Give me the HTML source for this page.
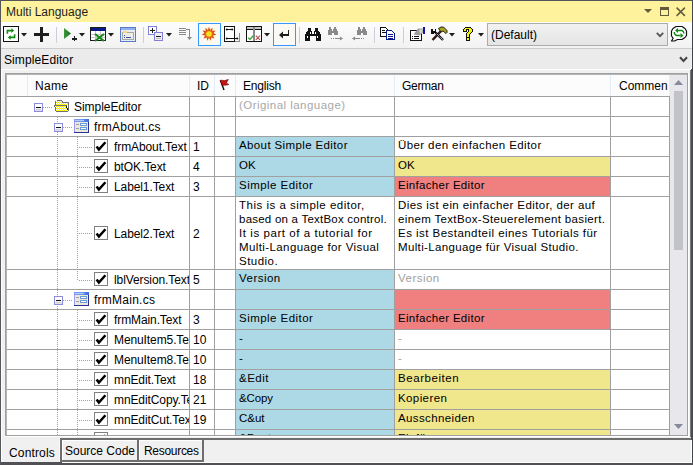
<!DOCTYPE html>
<html><head><meta charset="utf-8">
<style>
*{box-sizing:border-box;margin:0;padding:0}
html,body{width:693px;height:465px;overflow:hidden;background:#F0F0F0}
body{position:relative;font-family:"Liberation Sans",sans-serif;font-size:12px;color:#000}
.a{position:absolute;display:block}
.t{position:absolute;white-space:pre;line-height:19px;height:19px}
.c{position:absolute;white-space:pre;line-height:19px;height:19px;overflow:hidden;font-size:11.5px;letter-spacing:0.4px}
.m{position:absolute;white-space:pre;line-height:14px;font-size:11.5px}
</style></head><body>
<div class="a" style="left:1px;top:1px;width:691px;height:21px;background:#FFF29D;"></div>
<div class="t" style="left:6px;top:3px;color:#1E1E1E">Multi Language</div>
<svg class="a" style="left:640px;top:4px" width="52" height="16" viewBox="0 0 52 16" shape-rendering="crispEdges"><path d="M4 5h8l-4 4z" fill="#645A3C" shape-rendering="auto"/><rect x="20.5" y="3.5" width="8" height="8" fill="none" stroke="#645A3C"/><rect x="20" y="3" width="9" height="2.5" fill="#645A3C"/><path d="M36.6 3.6l8.3 8.3M44.9 3.6l-8.3 8.3" stroke="#645A3C" stroke-width="1.5" shape-rendering="auto"/></svg>
<div class="a" style="left:1px;top:22px;width:691px;height:26px;background:linear-gradient(#FDFDFD,#F2F2F2);"></div>
<div class="a" style="left:1px;top:48px;width:691px;height:1px;background:#CCCCCC;"></div>
<svg class="a" style="left:3px;top:26px" width="16" height="16" viewBox="0 0 16 16" shape-rendering="crispEdges"><rect x="0.5" y="0.5" width="15" height="15" fill="#fff" stroke="#111"/><g shape-rendering="auto" fill="none" stroke="#118A11" stroke-width="1.6"><path d="M4.4 7.8V4.6H9.2"/><path d="M11.6 8.2V11.4H6.8"/></g><g shape-rendering="auto" fill="#118A11"><path d="M8.3 2.2L11.2 4.6 8.3 7z"/><path d="M7.7 9L4.8 11.4 7.7 13.8z"/></g></svg>
<svg class="a" style="left:21px;top:33px" width="6" height="4" viewBox="0 0 6 4" shape-rendering="crispEdges"><path d="M0 0h6l-3 3.5z" fill="#1E1E1E" shape-rendering="auto"/></svg>
<div class="a" style="left:34px;top:33px;width:15px;height:3px;background:#1E1E1E;"></div>
<div class="a" style="left:40px;top:27px;width:3px;height:15px;background:#1E1E1E;"></div>
<div class="a" style="left:56px;top:27px;width:1px;height:16px;background:#CCCEDB;"></div>
<svg class="a" style="left:63px;top:27px" width="22" height="15" viewBox="0 0 22 15" shape-rendering="crispEdges"><defs><linearGradient id="gp" x1="0" y1="0" x2="1" y2="0"><stop offset="0" stop-color="#3C9A3C"/><stop offset="1" stop-color="#1E6E1E"/></linearGradient></defs><path d="M1 1l7 5.5-7 5.5z" fill="url(#gp)" shape-rendering="auto"/><rect x="9" y="11" width="5" height="1.5" fill="#1E1E1E"/><rect x="10.8" y="9" width="1.5" height="5" fill="#1E1E1E"/></svg>
<svg class="a" style="left:79px;top:33px" width="6" height="4" viewBox="0 0 6 4" shape-rendering="crispEdges"><path d="M0 0h6l-3 3.5z" fill="#1E1E1E" shape-rendering="auto"/></svg>
<svg class="a" style="left:90px;top:27px" width="17" height="15" viewBox="0 0 17 15" shape-rendering="crispEdges"><rect x="0.5" y="0.5" width="15" height="13" fill="#fff" stroke="#1E1E1E"/><rect x="1" y="1" width="15" height="3" fill="#0A1A8A"/><path d="M1 7.5h14M1 10.5h14M5.5 4v9M10.5 4v9" stroke="#C8C8C8"/><path d="M5 7l9 7M14 7l-9 7" stroke="#1A8A1A" stroke-width="2.2" shape-rendering="auto"/></svg>
<svg class="a" style="left:108px;top:33px" width="6" height="4" viewBox="0 0 6 4" shape-rendering="crispEdges"><path d="M0 0h6l-3 3.5z" fill="#1E1E1E" shape-rendering="auto"/></svg>
<svg class="a" style="left:120px;top:27px" width="17" height="16" viewBox="0 0 17 16" shape-rendering="crispEdges"><rect x="0.5" y="0.5" width="15" height="14" fill="#E8ECF4" stroke="#5A7CC8"/><rect x="1" y="1" width="14" height="2" fill="#8FB0E8"/><rect x="2.5" y="5.5" width="11" height="7" fill="#EDEDE6" stroke="#A8A8A0"/><rect x="3" y="4" width="4" height="2" fill="#F0D890"/><rect x="4" y="8" width="1" height="1" fill="#3050C0"/><rect x="4" y="10" width="1" height="1" fill="#3050C0"/><rect x="6" y="10" width="5" height="1" fill="#3050C0"/></svg>
<div class="a" style="left:143px;top:27px;width:1px;height:16px;background:#CCCEDB;"></div>
<svg class="a" style="left:148px;top:26px" width="17" height="16" viewBox="0 0 17 16" shape-rendering="crispEdges"><rect x="0.5" y="0.5" width="8" height="8" rx="1" fill="#fff" stroke="#8080DA"/><path d="M2 4.5h5M4.5 2v5" stroke="#1E1E1E" stroke-width="1.2"/><rect x="6.5" y="6.5" width="8" height="8" rx="1" fill="#F0F0F0" stroke="#8080DA"/><path d="M8 10.5h5" stroke="#1E1E1E" stroke-width="1.2"/><path d="M8 12.5h5" stroke="#C0C0C0"/></svg>
<svg class="a" style="left:166px;top:33px" width="6" height="4" viewBox="0 0 6 4" shape-rendering="crispEdges"><path d="M0 0h6l-3 3.5z" fill="#1E1E1E" shape-rendering="auto"/></svg>
<svg class="a" style="left:178px;top:27px" width="16" height="14" viewBox="0 0 16 14" shape-rendering="crispEdges"><path d="M1 1.5h7M1 3.5h7M1 5.5h7M1 7.5h7" stroke="#8A8A8A"/><path d="M8 2.5h3.5v9" fill="none" stroke="#8A8A8A"/><path d="M9 10l2.5 3 2.5-3z" fill="#8A8A8A" shape-rendering="auto"/></svg>
<div class="a" style="left:198px;top:23px;width:23px;height:23px;background:#FBF9F4;border:1px solid #3399FF"></div>
<svg class="a" style="left:200px;top:25px" width="19" height="19" viewBox="0 0 19 19" shape-rendering="crispEdges"><g shape-rendering="auto"><circle cx="9" cy="9" r="7" fill="#FFF6C0" opacity="0.6"/><path d="M9 1.8L10.1 5 12.6 2.8 12.3 6.1 15.5 5.5 13.5 8.1 16.3 9.8 12.9 10.5 14.4 13.5 11.3 12.4 10.6 15.8 9 12.8 7.4 15.8 6.7 12.4 3.6 13.5 5.1 10.5 1.7 9.8 4.5 8.1 2.5 5.5 5.7 6.1 5.4 2.8 7.9 5z" fill="#D84A1E"/><circle cx="9" cy="9" r="4" fill="#E86A18"/><circle cx="9" cy="9" r="2.8" fill="#F4E21A"/></g></svg>
<svg class="a" style="left:224px;top:26px" width="17" height="17" viewBox="0 0 17 17" shape-rendering="crispEdges"><rect x="0.5" y="0.5" width="10" height="15" fill="#fff" stroke="#111"/><rect x="0" y="0" width="11" height="1.2" fill="#111"/><path d="M2 3.5H9M2 12.5H14" stroke="#111"/><g shape-rendering="auto" fill="#111"><path d="M1.5 3.5L3.2 2V5z"/><path d="M9.5 3.5L7.8 2V5z"/><path d="M1.5 12.5L3.2 11V14z"/><path d="M14.5 12.5L12.8 11V14z"/></g><path d="M15.5 7V15.5H11" fill="none" stroke="#8A8A8A"/></svg>
<svg class="a" style="left:246px;top:26px" width="17" height="17" viewBox="0 0 17 17" shape-rendering="crispEdges"><rect x="0.5" y="0.5" width="15" height="15" fill="#fff" stroke="#111"/><rect x="1" y="1" width="14" height="2" fill="#C8C8C8"/><rect x="1" y="3" width="14" height="1" fill="#111"/><rect x="7" y="1" width="2" height="14" fill="#8A8A8A"/><path d="M2.2 11.8L4 13.4 7.2 9.8" fill="none" stroke="#2EA02E" stroke-width="1.3" shape-rendering="auto"/><path d="M9.8 9.6L14 13.8M14 9.6L9.8 13.8" stroke="#C04848" stroke-width="1.1" shape-rendering="auto"/></svg>
<svg class="a" style="left:264px;top:33px" width="6" height="4" viewBox="0 0 6 4" shape-rendering="crispEdges"><path d="M0 0h6l-3 3.5z" fill="#1E1E1E" shape-rendering="auto"/></svg>
<div class="a" style="left:273px;top:23px;width:23px;height:23px;background:#FBF9F4;border:1px solid #3399FF"></div>
<svg class="a" style="left:278px;top:29px" width="13" height="10" viewBox="0 0 13 10" shape-rendering="crispEdges"><path d="M10.5 1v5H4" fill="none" stroke="#1E1E1E" stroke-width="1.8"/><path d="M1 6l4-3.5v7z" fill="#1E1E1E" shape-rendering="auto"/></svg>
<div class="a" style="left:299px;top:27px;width:1px;height:16px;background:#CCCEDB;"></div>
<svg class="a" style="left:305px;top:27px" width="16" height="15" viewBox="0 0 16 15" shape-rendering="crispEdges"><path d="M3 1h3v3h1v3h2V4h1V1h3v3h1l2 4v6H11V9H5v5H0V8l2-4h1z" fill="#111"/><rect x="2" y="9" width="1" height="2" fill="#fff"/><rect x="12" y="9" width="1" height="2" fill="#fff"/><rect x="5" y="5" width="1" height="2" fill="#fff"/><rect x="10" y="5" width="1" height="2" fill="#fff"/></svg>
<svg class="a" style="left:327px;top:26px" width="17" height="15" viewBox="0 0 17 15" shape-rendering="crispEdges"><path d="M2 1h2v2h1v2h1V3h1V1h2v2h1l1 3v3H7V7H5v2H1V6l1-3z" fill="#8A8A8A"/><path d="M4 12.5h1M6 12.5h1M8 12.5h6" stroke="#8A8A8A"/><path d="M13 10.5l3 2-3 2z" fill="#8A8A8A" shape-rendering="auto"/></svg>
<svg class="a" style="left:351px;top:26px" width="17" height="15" viewBox="0 0 17 15" shape-rendering="crispEdges"><path d="M7 1h2v2h1v2h1V3h1V1h2v2h1l1 3v3H12V7h-2v2H6V6l1-3z" fill="#8A8A8A"/><path d="M3 12.5h6M10 12.5h1M12 12.5h1" stroke="#8A8A8A"/><path d="M4 10.5l-3 2 3 2z" fill="#8A8A8A" shape-rendering="auto"/></svg>
<div class="a" style="left:374px;top:27px;width:1px;height:16px;background:#CCCEDB;"></div>
<svg class="a" style="left:380px;top:27px" width="17" height="14" viewBox="0 0 17 14" shape-rendering="crispEdges"><path d="M0.5 0.5h5l2 2v7h-7z" fill="#fff" stroke="#111"/><path d="M2 3.5h3M2 5.5h4" stroke="#111"/><path d="M6.5 3.5h5l3 3v6h-8z" fill="#fff" stroke="#0A1A8A"/><path d="M8 7.5h5M8 9.5h5M8 11.5h5" stroke="#0A1A8A"/></svg>
<div class="a" style="left:403px;top:27px;width:1px;height:16px;background:#CCCEDB;"></div>
<svg class="a" style="left:410px;top:26px" width="16" height="15" viewBox="0 0 16 15" shape-rendering="crispEdges"><rect x="0.6" y="4.6" width="10.8" height="9.8" fill="#fff" stroke="#111" stroke-width="1.2"/><path d="M2 10.5h1M4 10.5h5M2 12.5h1M4 12.5h5" stroke="#111"/><path d="M3.5 8.5L8 2.5H12.5L13 6.5L9.5 9.5Z" fill="#9C9C9C" shape-rendering="auto"/><path d="M9 3.5H12L12.3 6.3L10 8Z" fill="#D4D4D4" shape-rendering="auto"/><rect x="13" y="1" width="2" height="7" fill="#1414A0"/></svg>
<svg class="a" style="left:430px;top:26px" width="18" height="16" viewBox="0 0 18 16" shape-rendering="crispEdges"><g shape-rendering="auto"><path d="M2.5 14L11 5" stroke="#111" stroke-width="2.4"/><path d="M2.5 14L11 5" stroke="#C02020" stroke-width="1" stroke-dasharray="1 1"/><path d="M5.5 6.5L13 14" stroke="#111" stroke-width="2.4"/><path d="M5.5 6.5L13 14" stroke="#fff" stroke-width="1" stroke-dasharray="1 1"/><path d="M8.5 2.5L11 1H13.5L17 4.5V6.5L16 7.5L13 5L11 6Z" fill="#A8A020" stroke="#111" stroke-width="0.9"/></g><path d="M1 3h2v2h2V3h1v4H4v1H1z" fill="#111"/></svg>
<svg class="a" style="left:449px;top:33px" width="6" height="4" viewBox="0 0 6 4" shape-rendering="crispEdges"><path d="M0 0h6l-3 3.5z" fill="#1E1E1E" shape-rendering="auto"/></svg>
<svg class="a" style="left:463px;top:27px" width="10" height="14" viewBox="0 0 10 14" shape-rendering="crispEdges"><rect x="2" y="0" width="1" height="1" fill="#111"/><rect x="3" y="0" width="1" height="1" fill="#111"/><rect x="4" y="0" width="1" height="1" fill="#111"/><rect x="5" y="0" width="1" height="1" fill="#111"/><rect x="6" y="0" width="1" height="1" fill="#111"/><rect x="7" y="0" width="1" height="1" fill="#111"/><rect x="1" y="1" width="1" height="1" fill="#111"/><rect x="2" y="1" width="1" height="1" fill="#F4F400"/><rect x="3" y="1" width="1" height="1" fill="#F4F400"/><rect x="4" y="1" width="1" height="1" fill="#F4F400"/><rect x="5" y="1" width="1" height="1" fill="#F4F400"/><rect x="6" y="1" width="1" height="1" fill="#F4F400"/><rect x="7" y="1" width="1" height="1" fill="#F4F400"/><rect x="8" y="1" width="1" height="1" fill="#111"/><rect x="0" y="2" width="1" height="1" fill="#111"/><rect x="1" y="2" width="1" height="1" fill="#F4F400"/><rect x="2" y="2" width="1" height="1" fill="#F4F400"/><rect x="3" y="2" width="1" height="1" fill="#111"/><rect x="4" y="2" width="1" height="1" fill="#111"/><rect x="5" y="2" width="1" height="1" fill="#111"/><rect x="6" y="2" width="1" height="1" fill="#F4F400"/><rect x="7" y="2" width="1" height="1" fill="#F4F400"/><rect x="8" y="2" width="1" height="1" fill="#F4F400"/><rect x="9" y="2" width="1" height="1" fill="#111"/><rect x="0" y="3" width="1" height="1" fill="#111"/><rect x="1" y="3" width="1" height="1" fill="#F4F400"/><rect x="2" y="3" width="1" height="1" fill="#F4F400"/><rect x="3" y="3" width="1" height="1" fill="#111"/><rect x="5" y="3" width="1" height="1" fill="#111"/><rect x="6" y="3" width="1" height="1" fill="#F4F400"/><rect x="7" y="3" width="1" height="1" fill="#F4F400"/><rect x="8" y="3" width="1" height="1" fill="#F4F400"/><rect x="9" y="3" width="1" height="1" fill="#111"/><rect x="0" y="4" width="1" height="1" fill="#111"/><rect x="1" y="4" width="1" height="1" fill="#111"/><rect x="2" y="4" width="1" height="1" fill="#111"/><rect x="3" y="4" width="1" height="1" fill="#111"/><rect x="5" y="4" width="1" height="1" fill="#111"/><rect x="6" y="4" width="1" height="1" fill="#F4F400"/><rect x="7" y="4" width="1" height="1" fill="#F4F400"/><rect x="8" y="4" width="1" height="1" fill="#F4F400"/><rect x="9" y="4" width="1" height="1" fill="#111"/><rect x="4" y="5" width="1" height="1" fill="#111"/><rect x="5" y="5" width="1" height="1" fill="#F4F400"/><rect x="6" y="5" width="1" height="1" fill="#F4F400"/><rect x="7" y="5" width="1" height="1" fill="#F4F400"/><rect x="8" y="5" width="1" height="1" fill="#111"/><rect x="3" y="6" width="1" height="1" fill="#111"/><rect x="4" y="6" width="1" height="1" fill="#F4F400"/><rect x="5" y="6" width="1" height="1" fill="#F4F400"/><rect x="6" y="6" width="1" height="1" fill="#F4F400"/><rect x="7" y="6" width="1" height="1" fill="#111"/><rect x="3" y="7" width="1" height="1" fill="#111"/><rect x="4" y="7" width="1" height="1" fill="#F4F400"/><rect x="5" y="7" width="1" height="1" fill="#F4F400"/><rect x="6" y="7" width="1" height="1" fill="#111"/><rect x="3" y="8" width="1" height="1" fill="#111"/><rect x="4" y="8" width="1" height="1" fill="#F4F400"/><rect x="5" y="8" width="1" height="1" fill="#F4F400"/><rect x="6" y="8" width="1" height="1" fill="#111"/><rect x="3" y="9" width="1" height="1" fill="#111"/><rect x="4" y="9" width="1" height="1" fill="#F4F400"/><rect x="5" y="9" width="1" height="1" fill="#F4F400"/><rect x="6" y="9" width="1" height="1" fill="#111"/><rect x="3" y="10" width="1" height="1" fill="#111"/><rect x="4" y="10" width="1" height="1" fill="#111"/><rect x="5" y="10" width="1" height="1" fill="#111"/><rect x="6" y="10" width="1" height="1" fill="#111"/><rect x="3" y="11" width="1" height="1" fill="#111"/><rect x="4" y="11" width="1" height="1" fill="#F4F400"/><rect x="5" y="11" width="1" height="1" fill="#F4F400"/><rect x="6" y="11" width="1" height="1" fill="#111"/><rect x="3" y="12" width="1" height="1" fill="#111"/><rect x="4" y="12" width="1" height="1" fill="#F4F400"/><rect x="5" y="12" width="1" height="1" fill="#F4F400"/><rect x="6" y="12" width="1" height="1" fill="#111"/><rect x="3" y="13" width="1" height="1" fill="#111"/><rect x="4" y="13" width="1" height="1" fill="#111"/><rect x="5" y="13" width="1" height="1" fill="#111"/><rect x="6" y="13" width="1" height="1" fill="#111"/></svg>
<svg class="a" style="left:478px;top:33px" width="6" height="4" viewBox="0 0 6 4" shape-rendering="crispEdges"><path d="M0 0h6l-3 3.5z" fill="#1E1E1E" shape-rendering="auto"/></svg>
<div class="a" style="left:487px;top:23px;width:181px;height:23px;background:linear-gradient(#F2F2F2,#E4E4E4);border:1px solid #ACACAC"></div>
<div class="t" style="left:491px;top:26px;">(Default)</div>
<svg class="a" style="left:656px;top:32px" width="8" height="6" viewBox="0 0 8 6" shape-rendering="crispEdges"><path d="M0.8 0.8l3.2 3.4 3.2-3.4" fill="none" stroke="#555" stroke-width="1.8" shape-rendering="auto"/></svg>
<svg class="a" style="left:669px;top:24px" width="22" height="20" viewBox="0 0 22 20" shape-rendering="crispEdges"><g shape-rendering="auto"><path d="M7 2.5H13L16 4.5L17.5 7V11.5L16 13.5L13 15.5H8.5L5.5 17H2.5L4.2 14.3L2.5 12V7L4 4.5Z" fill="#fff" stroke="#111" stroke-width="1.2" stroke-linejoin="round"/><path d="M8.5 6.5H12.8Q14.8 7 15 9.5" fill="none" stroke="#118A11" stroke-width="1.4"/><path d="M6 6.5L9 4V9Z" fill="#118A11"/><path d="M5.2 8Q5.5 11.5 8 11.5H11.5" fill="none" stroke="#118A11" stroke-width="1.4"/><path d="M14.5 11.5L11.5 9V14Z" fill="#118A11"/></g></svg>
<div class="a" style="left:1px;top:49px;width:690px;height:20px;background:#EBEBEB;"></div>
<div class="t" style="left:4px;top:51px;letter-spacing:0.1px">SimpleEditor</div>
<svg class="a" style="left:679px;top:56px" width="9" height="8" viewBox="0 0 9 8" shape-rendering="crispEdges"><path d="M1 1.2l3.5 3.8L8 1.2" fill="none" stroke="#444" stroke-width="2" shape-rendering="auto"/></svg>
<div class="a" style="left:1px;top:69px;width:690px;height:1px;background:#FFFFFF;"></div>
<div class="a" style="left:1px;top:69px;width:1px;height:396px;background:#FFFFFF;"></div>
<div class="a" style="left:0px;top:0px;width:693px;height:1px;background:#55555C;"></div>
<div class="a" style="left:0px;top:0px;width:1px;height:465px;background:#55555C;"></div>
<div class="a" style="left:692px;top:0px;width:1px;height:465px;background:#45454D;"></div>
<div class="a" style="left:690px;top:70px;width:1px;height:392px;background:#787878;"></div>
<div class="a" style="left:691px;top:69px;width:1px;height:396px;background:#505055;"></div>
<div class="a" style="left:5px;top:73px;width:683px;height:1px;background:#A0A0A0;"></div>
<div class="a" style="left:5px;top:73px;width:1px;height:364px;background:#A0A0A0;"></div>
<div class="a" style="left:6px;top:74px;width:681px;height:1px;background:#B4B4B4;"></div>
<div class="a" style="left:6px;top:74px;width:1px;height:362px;background:#B4B4B4;"></div>
<div class="a" style="left:687px;top:74px;width:1px;height:362px;background:#A0A0A0;"></div>
<div class="a" style="left:6px;top:435px;width:682px;height:1px;background:#A0A0A0;"></div>
<div class="a" style="left:688px;top:73px;width:1px;height:364px;background:#FFFFFF;"></div>
<div class="a" style="left:5px;top:436px;width:684px;height:1px;background:#FFFFFF;"></div>
<div class="a" style="left:7px;top:75px;width:680px;height:360px;background:#FFFFFF;"></div>
<div class="a" style="left:7px;top:75px;width:663px;height:21px;background:#FCFCFC;"></div>
<div class="a" style="left:7px;top:96px;width:663px;height:1px;background:#A0A0A0;"></div>
<div class="a" style="left:27px;top:75px;width:1px;height:21px;background:#E3EDF7;"></div>
<div class="a" style="left:189px;top:75px;width:1px;height:21px;background:#E3EDF7;"></div>
<div class="a" style="left:214px;top:75px;width:1px;height:21px;background:#E3EDF7;"></div>
<div class="a" style="left:235px;top:75px;width:1px;height:21px;background:#E3EDF7;"></div>
<div class="a" style="left:394px;top:75px;width:1px;height:21px;background:#E3EDF7;"></div>
<div class="a" style="left:610px;top:75px;width:1px;height:21px;background:#E3EDF7;"></div>
<div class="t" style="left:35px;top:77px;letter-spacing:0.3px">Name</div>
<div class="t" style="left:197px;top:77px;">ID</div>
<svg class="a" style="left:219px;top:79px" width="11" height="12" viewBox="0 0 11 12" shape-rendering="crispEdges"><path d="M1.5 1.5L5 11" stroke="#111" stroke-width="1.4" shape-rendering="auto"/><path d="M1 1.5c2-1 4 1 6.5-.5l1.8-0.5-2 3.5 2.5 1.5c-2 .5-4 1-6.5.8z" fill="#D01010" stroke="#500" stroke-width="0.6" shape-rendering="auto"/></svg>
<div class="t" style="left:243px;top:77px;letter-spacing:-0.2px">English</div>
<div class="t" style="left:402px;top:77px;letter-spacing:-0.3px">German</div>
<div class="t" style="left:619px;top:77px;width:50px;overflow:hidden">Commen</div>
<div class="a" style="left:7px;top:97px;width:663px;height:338px;overflow:hidden">
<svg width="0" height="0" style="position:absolute"><defs><linearGradient id="mbg" x1="0" y1="0" x2="0" y2="1"><stop offset="0.45" stop-color="#fff"/><stop offset="1" stop-color="#D8D8D8"/></linearGradient></defs></svg>
<div class="a" style="left:50px;top:20px;width:1px;height:6px;background:repeating-linear-gradient(180deg,#A0A0A0 0 1px,transparent 1px 2px);"></div>
<div class="a" style="left:50px;top:35px;width:1px;height:304px;background:repeating-linear-gradient(180deg,#A0A0A0 0 1px,transparent 1px 2px);"></div>
<div class="a" style="left:70px;top:40px;width:1px;height:144px;background:repeating-linear-gradient(180deg,#A0A0A0 0 1px,transparent 1px 2px);"></div>
<div class="a" style="left:70px;top:213px;width:1px;height:126px;background:repeating-linear-gradient(180deg,#A0A0A0 0 1px,transparent 1px 2px);"></div>
<div class="a" style="left:229px;top:0px;width:158px;height:19px;background:#fff;"></div>
<div class="a" style="left:388px;top:0px;width:215px;height:19px;background:#fff;"></div>
<div class="a" style="left:0px;top:19px;width:663px;height:1px;background:#A0A0A0;"></div>
<div class="a" style="left:182px;top:-1px;width:1px;height:21px;background:#A0A0A0;"></div>
<div class="a" style="left:207px;top:-1px;width:1px;height:21px;background:#A0A0A0;"></div>
<div class="a" style="left:228px;top:-1px;width:1px;height:21px;background:#A0A0A0;"></div>
<div class="a" style="left:387px;top:-1px;width:1px;height:21px;background:#A0A0A0;"></div>
<div class="a" style="left:603px;top:-1px;width:1px;height:21px;background:#A0A0A0;"></div>
<div class="a" style="left:662px;top:-1px;width:1px;height:21px;background:#A0A0A0;"></div>
<svg class="a" style="left:27px;top:6px" width="9" height="9" viewBox="0 0 9 9" shape-rendering="crispEdges"><rect x="0.5" y="0.5" width="8" height="8" rx="1.2" fill="url(#mbg)" stroke="#8B8BE0"/><path d="M2 4.5h5" stroke="#111" stroke-width="1.2"/><path d="M2 6.5h5" stroke="#CFCFCF"/></svg>
<div class="a" style="left:36px;top:10px;width:10px;height:1px;background:repeating-linear-gradient(90deg,#A0A0A0 0 1px,transparent 1px 2px);"></div>
<svg class="a" style="left:47px;top:3px" width="15" height="12" viewBox="0 0 15 12" shape-rendering="crispEdges"><g fill="#707070"><rect x="3" y="0" width="5" height="1"/><rect x="2" y="1" width="1" height="1"/><rect x="8" y="1" width="1" height="1"/><rect x="1" y="1" width="1" height="4"/><rect x="8" y="2" width="6" height="1"/><rect x="14" y="2" width="1" height="9"/><rect x="0" y="5" width="13" height="1"/><rect x="0" y="5" width="1" height="2"/><rect x="1" y="7" width="1" height="4"/><rect x="2" y="11" width="12" height="1"/></g><rect x="2" y="1" width="6" height="4" fill="url(#dith)"/><rect x="8" y="3" width="6" height="2" fill="url(#dith)"/><rect x="1" y="6" width="12" height="1" fill="url(#dith)"/><rect x="2" y="7" width="11" height="4" fill="url(#dith)"/><rect x="13" y="10" width="1" height="1" fill="url(#dith)"/><g fill="#111"><rect x="12" y="6" width="1" height="2"/><rect x="13" y="8" width="1" height="2"/></g></svg>
<div class="t" style="left:67px;top:1px;letter-spacing:-0.05px">SimpleEditor</div>
<div class="c" style="left:232px;top:-1px;color:#A8A8A8;letter-spacing:0.46px">(Original language)</div>
<div class="a" style="left:229px;top:20px;width:158px;height:19px;background:#fff;"></div>
<div class="a" style="left:388px;top:20px;width:215px;height:19px;background:#fff;"></div>
<div class="a" style="left:0px;top:39px;width:663px;height:1px;background:#A0A0A0;"></div>
<div class="a" style="left:182px;top:19px;width:1px;height:21px;background:#A0A0A0;"></div>
<div class="a" style="left:207px;top:19px;width:1px;height:21px;background:#A0A0A0;"></div>
<div class="a" style="left:228px;top:19px;width:1px;height:21px;background:#A0A0A0;"></div>
<div class="a" style="left:387px;top:19px;width:1px;height:21px;background:#A0A0A0;"></div>
<div class="a" style="left:603px;top:19px;width:1px;height:21px;background:#A0A0A0;"></div>
<div class="a" style="left:662px;top:19px;width:1px;height:21px;background:#A0A0A0;"></div>
<svg class="a" style="left:47px;top:26px" width="9" height="9" viewBox="0 0 9 9" shape-rendering="crispEdges"><rect x="0.5" y="0.5" width="8" height="8" rx="1.2" fill="url(#mbg)" stroke="#8B8BE0"/><path d="M2 4.5h5" stroke="#111" stroke-width="1.2"/><path d="M2 6.5h5" stroke="#CFCFCF"/></svg>
<div class="a" style="left:56px;top:30px;width:10px;height:1px;background:repeating-linear-gradient(90deg,#A0A0A0 0 1px,transparent 1px 2px);"></div>
<svg class="a" style="left:67px;top:22px" width="15" height="14" viewBox="0 0 15 14" shape-rendering="crispEdges"><defs><linearGradient id="tb" x1="0" x2="1"><stop offset="0" stop-color="#8A94F0"/><stop offset="0.5" stop-color="#6A9AF0"/><stop offset="1" stop-color="#3A6ADA"/></linearGradient></defs><rect x="0" y="0" width="15" height="14" fill="#2A3290"/><rect x="0" y="0" width="14" height="13" fill="#9A9AF0"/><rect x="0" y="0" width="15" height="3" fill="url(#tb)"/><rect x="1" y="1" width="9" height="1" fill="#B8C8F8"/><rect x="1" y="3" width="13" height="10" fill="#ECE9D8"/><rect x="2" y="5" width="3" height="1" fill="#9A9AA8"/><rect x="2" y="9" width="3" height="1" fill="#9A9AA8"/><rect x="6" y="4" width="7" height="3" fill="#6A9AE0"/><rect x="7" y="5" width="5" height="1" fill="#fff"/><rect x="6" y="8" width="7" height="3" fill="#6A9AE0"/><rect x="7" y="9" width="5" height="1" fill="#fff"/></svg>
<div class="t" style="left:87px;top:21px;letter-spacing:0.25px">frmAbout.cs</div>
<div class="a" style="left:229px;top:40px;width:158px;height:19px;background:#ADD8E6;"></div>
<div class="a" style="left:388px;top:40px;width:215px;height:19px;background:#fff;"></div>
<div class="a" style="left:0px;top:59px;width:663px;height:1px;background:#A0A0A0;"></div>
<div class="a" style="left:182px;top:39px;width:1px;height:21px;background:#A0A0A0;"></div>
<div class="a" style="left:207px;top:39px;width:1px;height:21px;background:#A0A0A0;"></div>
<div class="a" style="left:228px;top:39px;width:1px;height:21px;background:#A0A0A0;"></div>
<div class="a" style="left:387px;top:39px;width:1px;height:21px;background:#A0A0A0;"></div>
<div class="a" style="left:603px;top:39px;width:1px;height:21px;background:#A0A0A0;"></div>
<div class="a" style="left:662px;top:39px;width:1px;height:21px;background:#A0A0A0;"></div>
<div class="a" style="left:72px;top:50px;width:14px;height:1px;background:repeating-linear-gradient(90deg,#A0A0A0 0 1px,transparent 1px 2px);"></div>
<svg class="a" style="left:87px;top:42px" width="14" height="14" viewBox="0 0 14 14" shape-rendering="crispEdges"><rect x="0.5" y="0.5" width="13" height="13" fill="#fff" stroke="#808080"/><path d="M2.6 7.4L4.9 10.6 11.4 3.2" fill="none" stroke="#000" stroke-width="2.5" shape-rendering="auto"/></svg>
<div class="t" style="left:107px;top:41px;width:75px;overflow:hidden;letter-spacing:-0.1px">frmAbout.Text</div>
<div class="t" style="left:186px;top:41px">1</div>
<div class="c" style="left:232px;top:39px;color:#000;letter-spacing:0.38px">About Simple Editor</div>
<div class="c" style="left:391px;top:39px;color:#000;letter-spacing:0.4px">Über den einfachen Editor</div>
<div class="a" style="left:229px;top:60px;width:158px;height:19px;background:#ADD8E6;"></div>
<div class="a" style="left:388px;top:60px;width:215px;height:19px;background:#F0E68C;"></div>
<div class="a" style="left:0px;top:79px;width:663px;height:1px;background:#A0A0A0;"></div>
<div class="a" style="left:182px;top:59px;width:1px;height:21px;background:#A0A0A0;"></div>
<div class="a" style="left:207px;top:59px;width:1px;height:21px;background:#A0A0A0;"></div>
<div class="a" style="left:228px;top:59px;width:1px;height:21px;background:#A0A0A0;"></div>
<div class="a" style="left:387px;top:59px;width:1px;height:21px;background:#A0A0A0;"></div>
<div class="a" style="left:603px;top:59px;width:1px;height:21px;background:#A0A0A0;"></div>
<div class="a" style="left:662px;top:59px;width:1px;height:21px;background:#A0A0A0;"></div>
<div class="a" style="left:72px;top:70px;width:14px;height:1px;background:repeating-linear-gradient(90deg,#A0A0A0 0 1px,transparent 1px 2px);"></div>
<svg class="a" style="left:87px;top:62px" width="14" height="14" viewBox="0 0 14 14" shape-rendering="crispEdges"><rect x="0.5" y="0.5" width="13" height="13" fill="#fff" stroke="#808080"/><path d="M2.6 7.4L4.9 10.6 11.4 3.2" fill="none" stroke="#000" stroke-width="2.5" shape-rendering="auto"/></svg>
<div class="t" style="left:107px;top:61px;width:75px;overflow:hidden;letter-spacing:-0.1px">btOK.Text</div>
<div class="t" style="left:186px;top:61px">4</div>
<div class="c" style="left:232px;top:59px;color:#000;letter-spacing:0px">OK</div>
<div class="c" style="left:391px;top:59px;color:#000;letter-spacing:0px">OK</div>
<div class="a" style="left:229px;top:80px;width:158px;height:19px;background:#ADD8E6;"></div>
<div class="a" style="left:388px;top:80px;width:215px;height:19px;background:#F08080;"></div>
<div class="a" style="left:0px;top:99px;width:663px;height:1px;background:#A0A0A0;"></div>
<div class="a" style="left:182px;top:79px;width:1px;height:21px;background:#A0A0A0;"></div>
<div class="a" style="left:207px;top:79px;width:1px;height:21px;background:#A0A0A0;"></div>
<div class="a" style="left:228px;top:79px;width:1px;height:21px;background:#A0A0A0;"></div>
<div class="a" style="left:387px;top:79px;width:1px;height:21px;background:#A0A0A0;"></div>
<div class="a" style="left:603px;top:79px;width:1px;height:21px;background:#A0A0A0;"></div>
<div class="a" style="left:662px;top:79px;width:1px;height:21px;background:#A0A0A0;"></div>
<div class="a" style="left:72px;top:90px;width:14px;height:1px;background:repeating-linear-gradient(90deg,#A0A0A0 0 1px,transparent 1px 2px);"></div>
<svg class="a" style="left:87px;top:82px" width="14" height="14" viewBox="0 0 14 14" shape-rendering="crispEdges"><rect x="0.5" y="0.5" width="13" height="13" fill="#fff" stroke="#808080"/><path d="M2.6 7.4L4.9 10.6 11.4 3.2" fill="none" stroke="#000" stroke-width="2.5" shape-rendering="auto"/></svg>
<div class="t" style="left:107px;top:81px;width:75px;overflow:hidden;letter-spacing:-0.1px">Label1.Text</div>
<div class="t" style="left:186px;top:81px">3</div>
<div class="c" style="left:232px;top:79px;color:#000;letter-spacing:0.46px">Simple Editor</div>
<div class="c" style="left:391px;top:79px;color:#000;letter-spacing:0.31px">Einfacher Editor</div>
<div class="a" style="left:229px;top:100px;width:158px;height:72px;background:#fff;"></div>
<div class="a" style="left:388px;top:100px;width:215px;height:72px;background:#fff;"></div>
<div class="a" style="left:0px;top:172px;width:663px;height:1px;background:#A0A0A0;"></div>
<div class="a" style="left:182px;top:99px;width:1px;height:74px;background:#A0A0A0;"></div>
<div class="a" style="left:207px;top:99px;width:1px;height:74px;background:#A0A0A0;"></div>
<div class="a" style="left:228px;top:99px;width:1px;height:74px;background:#A0A0A0;"></div>
<div class="a" style="left:387px;top:99px;width:1px;height:74px;background:#A0A0A0;"></div>
<div class="a" style="left:603px;top:99px;width:1px;height:74px;background:#A0A0A0;"></div>
<div class="a" style="left:662px;top:99px;width:1px;height:74px;background:#A0A0A0;"></div>
<div class="a" style="left:72px;top:136px;width:14px;height:1px;background:repeating-linear-gradient(90deg,#A0A0A0 0 1px,transparent 1px 2px);"></div>
<svg class="a" style="left:87px;top:129px" width="14" height="14" viewBox="0 0 14 14" shape-rendering="crispEdges"><rect x="0.5" y="0.5" width="13" height="13" fill="#fff" stroke="#808080"/><path d="M2.6 7.4L4.9 10.6 11.4 3.2" fill="none" stroke="#000" stroke-width="2.5" shape-rendering="auto"/></svg>
<div class="t" style="left:107px;top:128px;width:75px;overflow:hidden;letter-spacing:-0.1px">Label2.Text</div>
<div class="t" style="left:186px;top:128px">2</div>
<div class="m" style="left:232px;top:101px;letter-spacing:0.5px">This is a simple editor,</div>
<div class="m" style="left:232px;top:115px;letter-spacing:0.23px">based on a TextBox control.</div>
<div class="m" style="left:232px;top:129px;letter-spacing:0.57px">It is part of a tutorial for</div>
<div class="m" style="left:232px;top:143px;letter-spacing:0.4px">Multi-Language for Visual</div>
<div class="m" style="left:232px;top:157px;letter-spacing:0.48px">Studio.</div>
<div class="m" style="left:391px;top:101px;letter-spacing:0.41px">Dies ist ein einfacher Editor, der auf</div>
<div class="m" style="left:391px;top:115px;letter-spacing:0.35px">einem TextBox-Steuerelement basiert.</div>
<div class="m" style="left:391px;top:129px;letter-spacing:0.46px">Es ist Bestandteil eines Tutorials für</div>
<div class="m" style="left:391px;top:143px;letter-spacing:0.35px">Multi-Language für Visual Studio.</div>
<div class="a" style="left:229px;top:173px;width:158px;height:19px;background:#ADD8E6;"></div>
<div class="a" style="left:388px;top:173px;width:215px;height:19px;background:#fff;"></div>
<div class="a" style="left:0px;top:192px;width:663px;height:1px;background:#A0A0A0;"></div>
<div class="a" style="left:182px;top:172px;width:1px;height:21px;background:#A0A0A0;"></div>
<div class="a" style="left:207px;top:172px;width:1px;height:21px;background:#A0A0A0;"></div>
<div class="a" style="left:228px;top:172px;width:1px;height:21px;background:#A0A0A0;"></div>
<div class="a" style="left:387px;top:172px;width:1px;height:21px;background:#A0A0A0;"></div>
<div class="a" style="left:603px;top:172px;width:1px;height:21px;background:#A0A0A0;"></div>
<div class="a" style="left:662px;top:172px;width:1px;height:21px;background:#A0A0A0;"></div>
<div class="a" style="left:72px;top:183px;width:14px;height:1px;background:repeating-linear-gradient(90deg,#A0A0A0 0 1px,transparent 1px 2px);"></div>
<svg class="a" style="left:87px;top:175px" width="14" height="14" viewBox="0 0 14 14" shape-rendering="crispEdges"><rect x="0.5" y="0.5" width="13" height="13" fill="#fff" stroke="#808080"/><path d="M2.6 7.4L4.9 10.6 11.4 3.2" fill="none" stroke="#000" stroke-width="2.5" shape-rendering="auto"/></svg>
<div class="t" style="left:107px;top:174px;width:75px;overflow:hidden;letter-spacing:-0.1px">lblVersion.Text</div>
<div class="t" style="left:186px;top:174px">5</div>
<div class="c" style="left:232px;top:172px;color:#000;letter-spacing:0.48px">Version</div>
<div class="c" style="left:391px;top:172px;color:#A0A0A0;letter-spacing:0.48px">Version</div>
<div class="a" style="left:229px;top:193px;width:158px;height:19px;background:#ADD8E6;"></div>
<div class="a" style="left:388px;top:193px;width:215px;height:19px;background:#F08080;"></div>
<div class="a" style="left:0px;top:212px;width:663px;height:1px;background:#A0A0A0;"></div>
<div class="a" style="left:182px;top:192px;width:1px;height:21px;background:#A0A0A0;"></div>
<div class="a" style="left:207px;top:192px;width:1px;height:21px;background:#A0A0A0;"></div>
<div class="a" style="left:228px;top:192px;width:1px;height:21px;background:#A0A0A0;"></div>
<div class="a" style="left:387px;top:192px;width:1px;height:21px;background:#A0A0A0;"></div>
<div class="a" style="left:603px;top:192px;width:1px;height:21px;background:#A0A0A0;"></div>
<div class="a" style="left:662px;top:192px;width:1px;height:21px;background:#A0A0A0;"></div>
<svg class="a" style="left:47px;top:199px" width="9" height="9" viewBox="0 0 9 9" shape-rendering="crispEdges"><rect x="0.5" y="0.5" width="8" height="8" rx="1.2" fill="url(#mbg)" stroke="#8B8BE0"/><path d="M2 4.5h5" stroke="#111" stroke-width="1.2"/><path d="M2 6.5h5" stroke="#CFCFCF"/></svg>
<div class="a" style="left:56px;top:203px;width:10px;height:1px;background:repeating-linear-gradient(90deg,#A0A0A0 0 1px,transparent 1px 2px);"></div>
<svg class="a" style="left:67px;top:195px" width="15" height="14" viewBox="0 0 15 14" shape-rendering="crispEdges"><defs><linearGradient id="tb" x1="0" x2="1"><stop offset="0" stop-color="#8A94F0"/><stop offset="0.5" stop-color="#6A9AF0"/><stop offset="1" stop-color="#3A6ADA"/></linearGradient></defs><rect x="0" y="0" width="15" height="14" fill="#2A3290"/><rect x="0" y="0" width="14" height="13" fill="#9A9AF0"/><rect x="0" y="0" width="15" height="3" fill="url(#tb)"/><rect x="1" y="1" width="9" height="1" fill="#B8C8F8"/><rect x="1" y="3" width="13" height="10" fill="#ECE9D8"/><rect x="2" y="5" width="3" height="1" fill="#9A9AA8"/><rect x="2" y="9" width="3" height="1" fill="#9A9AA8"/><rect x="6" y="4" width="7" height="3" fill="#6A9AE0"/><rect x="7" y="5" width="5" height="1" fill="#fff"/><rect x="6" y="8" width="7" height="3" fill="#6A9AE0"/><rect x="7" y="9" width="5" height="1" fill="#fff"/></svg>
<div class="t" style="left:87px;top:194px;letter-spacing:0.25px">frmMain.cs</div>
<div class="a" style="left:229px;top:213px;width:158px;height:19px;background:#ADD8E6;"></div>
<div class="a" style="left:388px;top:213px;width:215px;height:19px;background:#F08080;"></div>
<div class="a" style="left:0px;top:232px;width:663px;height:1px;background:#A0A0A0;"></div>
<div class="a" style="left:182px;top:212px;width:1px;height:21px;background:#A0A0A0;"></div>
<div class="a" style="left:207px;top:212px;width:1px;height:21px;background:#A0A0A0;"></div>
<div class="a" style="left:228px;top:212px;width:1px;height:21px;background:#A0A0A0;"></div>
<div class="a" style="left:387px;top:212px;width:1px;height:21px;background:#A0A0A0;"></div>
<div class="a" style="left:603px;top:212px;width:1px;height:21px;background:#A0A0A0;"></div>
<div class="a" style="left:662px;top:212px;width:1px;height:21px;background:#A0A0A0;"></div>
<div class="a" style="left:72px;top:223px;width:14px;height:1px;background:repeating-linear-gradient(90deg,#A0A0A0 0 1px,transparent 1px 2px);"></div>
<svg class="a" style="left:87px;top:215px" width="14" height="14" viewBox="0 0 14 14" shape-rendering="crispEdges"><rect x="0.5" y="0.5" width="13" height="13" fill="#fff" stroke="#808080"/><path d="M2.6 7.4L4.9 10.6 11.4 3.2" fill="none" stroke="#000" stroke-width="2.5" shape-rendering="auto"/></svg>
<div class="t" style="left:107px;top:214px;width:75px;overflow:hidden;letter-spacing:-0.1px">frmMain.Text</div>
<div class="t" style="left:186px;top:214px">3</div>
<div class="c" style="left:232px;top:212px;color:#000;letter-spacing:0.46px">Simple Editor</div>
<div class="c" style="left:391px;top:212px;color:#000;letter-spacing:0.31px">Einfacher Editor</div>
<div class="a" style="left:229px;top:233px;width:158px;height:19px;background:#ADD8E6;"></div>
<div class="a" style="left:388px;top:233px;width:215px;height:19px;background:#fff;"></div>
<div class="a" style="left:0px;top:252px;width:663px;height:1px;background:#A0A0A0;"></div>
<div class="a" style="left:182px;top:232px;width:1px;height:21px;background:#A0A0A0;"></div>
<div class="a" style="left:207px;top:232px;width:1px;height:21px;background:#A0A0A0;"></div>
<div class="a" style="left:228px;top:232px;width:1px;height:21px;background:#A0A0A0;"></div>
<div class="a" style="left:387px;top:232px;width:1px;height:21px;background:#A0A0A0;"></div>
<div class="a" style="left:603px;top:232px;width:1px;height:21px;background:#A0A0A0;"></div>
<div class="a" style="left:662px;top:232px;width:1px;height:21px;background:#A0A0A0;"></div>
<div class="a" style="left:72px;top:243px;width:14px;height:1px;background:repeating-linear-gradient(90deg,#A0A0A0 0 1px,transparent 1px 2px);"></div>
<svg class="a" style="left:87px;top:235px" width="14" height="14" viewBox="0 0 14 14" shape-rendering="crispEdges"><rect x="0.5" y="0.5" width="13" height="13" fill="#fff" stroke="#808080"/><path d="M2.6 7.4L4.9 10.6 11.4 3.2" fill="none" stroke="#000" stroke-width="2.5" shape-rendering="auto"/></svg>
<div class="t" style="left:107px;top:234px;width:75px;overflow:hidden;letter-spacing:-0.1px">MenuItem5.Text</div>
<div class="t" style="left:186px;top:234px">10</div>
<div class="c" style="left:232px;top:232px;color:#000;letter-spacing:0.4px">-</div>
<div class="c" style="left:391px;top:232px;color:#A0A0A0;letter-spacing:0.4px">-</div>
<div class="a" style="left:229px;top:253px;width:158px;height:19px;background:#ADD8E6;"></div>
<div class="a" style="left:388px;top:253px;width:215px;height:19px;background:#fff;"></div>
<div class="a" style="left:0px;top:272px;width:663px;height:1px;background:#A0A0A0;"></div>
<div class="a" style="left:182px;top:252px;width:1px;height:21px;background:#A0A0A0;"></div>
<div class="a" style="left:207px;top:252px;width:1px;height:21px;background:#A0A0A0;"></div>
<div class="a" style="left:228px;top:252px;width:1px;height:21px;background:#A0A0A0;"></div>
<div class="a" style="left:387px;top:252px;width:1px;height:21px;background:#A0A0A0;"></div>
<div class="a" style="left:603px;top:252px;width:1px;height:21px;background:#A0A0A0;"></div>
<div class="a" style="left:662px;top:252px;width:1px;height:21px;background:#A0A0A0;"></div>
<div class="a" style="left:72px;top:263px;width:14px;height:1px;background:repeating-linear-gradient(90deg,#A0A0A0 0 1px,transparent 1px 2px);"></div>
<svg class="a" style="left:87px;top:255px" width="14" height="14" viewBox="0 0 14 14" shape-rendering="crispEdges"><rect x="0.5" y="0.5" width="13" height="13" fill="#fff" stroke="#808080"/><path d="M2.6 7.4L4.9 10.6 11.4 3.2" fill="none" stroke="#000" stroke-width="2.5" shape-rendering="auto"/></svg>
<div class="t" style="left:107px;top:254px;width:75px;overflow:hidden;letter-spacing:-0.1px">MenuItem8.Text</div>
<div class="t" style="left:186px;top:254px">10</div>
<div class="c" style="left:232px;top:252px;color:#000;letter-spacing:0.4px">-</div>
<div class="c" style="left:391px;top:252px;color:#A0A0A0;letter-spacing:0.4px">-</div>
<div class="a" style="left:229px;top:273px;width:158px;height:19px;background:#ADD8E6;"></div>
<div class="a" style="left:388px;top:273px;width:215px;height:19px;background:#F0E68C;"></div>
<div class="a" style="left:0px;top:292px;width:663px;height:1px;background:#A0A0A0;"></div>
<div class="a" style="left:182px;top:272px;width:1px;height:21px;background:#A0A0A0;"></div>
<div class="a" style="left:207px;top:272px;width:1px;height:21px;background:#A0A0A0;"></div>
<div class="a" style="left:228px;top:272px;width:1px;height:21px;background:#A0A0A0;"></div>
<div class="a" style="left:387px;top:272px;width:1px;height:21px;background:#A0A0A0;"></div>
<div class="a" style="left:603px;top:272px;width:1px;height:21px;background:#A0A0A0;"></div>
<div class="a" style="left:662px;top:272px;width:1px;height:21px;background:#A0A0A0;"></div>
<div class="a" style="left:72px;top:283px;width:14px;height:1px;background:repeating-linear-gradient(90deg,#A0A0A0 0 1px,transparent 1px 2px);"></div>
<svg class="a" style="left:87px;top:275px" width="14" height="14" viewBox="0 0 14 14" shape-rendering="crispEdges"><rect x="0.5" y="0.5" width="13" height="13" fill="#fff" stroke="#808080"/><path d="M2.6 7.4L4.9 10.6 11.4 3.2" fill="none" stroke="#000" stroke-width="2.5" shape-rendering="auto"/></svg>
<div class="t" style="left:107px;top:274px;width:75px;overflow:hidden;letter-spacing:-0.1px">mnEdit.Text</div>
<div class="t" style="left:186px;top:274px">18</div>
<div class="c" style="left:232px;top:272px;color:#000;letter-spacing:0.48px">&amp;Edit</div>
<div class="c" style="left:391px;top:272px;color:#000;letter-spacing:0.56px">Bearbeiten</div>
<div class="a" style="left:229px;top:293px;width:158px;height:19px;background:#ADD8E6;"></div>
<div class="a" style="left:388px;top:293px;width:215px;height:19px;background:#F0E68C;"></div>
<div class="a" style="left:0px;top:312px;width:663px;height:1px;background:#A0A0A0;"></div>
<div class="a" style="left:182px;top:292px;width:1px;height:21px;background:#A0A0A0;"></div>
<div class="a" style="left:207px;top:292px;width:1px;height:21px;background:#A0A0A0;"></div>
<div class="a" style="left:228px;top:292px;width:1px;height:21px;background:#A0A0A0;"></div>
<div class="a" style="left:387px;top:292px;width:1px;height:21px;background:#A0A0A0;"></div>
<div class="a" style="left:603px;top:292px;width:1px;height:21px;background:#A0A0A0;"></div>
<div class="a" style="left:662px;top:292px;width:1px;height:21px;background:#A0A0A0;"></div>
<div class="a" style="left:72px;top:303px;width:14px;height:1px;background:repeating-linear-gradient(90deg,#A0A0A0 0 1px,transparent 1px 2px);"></div>
<svg class="a" style="left:87px;top:295px" width="14" height="14" viewBox="0 0 14 14" shape-rendering="crispEdges"><rect x="0.5" y="0.5" width="13" height="13" fill="#fff" stroke="#808080"/><path d="M2.6 7.4L4.9 10.6 11.4 3.2" fill="none" stroke="#000" stroke-width="2.5" shape-rendering="auto"/></svg>
<div class="t" style="left:107px;top:294px;width:75px;overflow:hidden;letter-spacing:-0.1px">mnEditCopy.Text</div>
<div class="t" style="left:186px;top:294px">21</div>
<div class="c" style="left:232px;top:292px;color:#000;letter-spacing:-0.1px">&amp;Copy</div>
<div class="c" style="left:391px;top:292px;color:#000;letter-spacing:0.4px">Kopieren</div>
<div class="a" style="left:229px;top:313px;width:158px;height:19px;background:#ADD8E6;"></div>
<div class="a" style="left:388px;top:313px;width:215px;height:19px;background:#F0E68C;"></div>
<div class="a" style="left:0px;top:332px;width:663px;height:1px;background:#A0A0A0;"></div>
<div class="a" style="left:182px;top:312px;width:1px;height:21px;background:#A0A0A0;"></div>
<div class="a" style="left:207px;top:312px;width:1px;height:21px;background:#A0A0A0;"></div>
<div class="a" style="left:228px;top:312px;width:1px;height:21px;background:#A0A0A0;"></div>
<div class="a" style="left:387px;top:312px;width:1px;height:21px;background:#A0A0A0;"></div>
<div class="a" style="left:603px;top:312px;width:1px;height:21px;background:#A0A0A0;"></div>
<div class="a" style="left:662px;top:312px;width:1px;height:21px;background:#A0A0A0;"></div>
<div class="a" style="left:72px;top:323px;width:14px;height:1px;background:repeating-linear-gradient(90deg,#A0A0A0 0 1px,transparent 1px 2px);"></div>
<svg class="a" style="left:87px;top:315px" width="14" height="14" viewBox="0 0 14 14" shape-rendering="crispEdges"><rect x="0.5" y="0.5" width="13" height="13" fill="#fff" stroke="#808080"/><path d="M2.6 7.4L4.9 10.6 11.4 3.2" fill="none" stroke="#000" stroke-width="2.5" shape-rendering="auto"/></svg>
<div class="t" style="left:107px;top:314px;width:75px;overflow:hidden;letter-spacing:-0.1px">mnEditCut.Text</div>
<div class="t" style="left:186px;top:314px">19</div>
<div class="c" style="left:232px;top:312px;color:#000;letter-spacing:0px">C&amp;ut</div>
<div class="c" style="left:391px;top:312px;color:#000;letter-spacing:0.38px">Ausschneiden</div>
<div class="a" style="left:229px;top:333px;width:158px;height:19px;background:#ADD8E6;"></div>
<div class="a" style="left:388px;top:333px;width:215px;height:19px;background:#F0E68C;"></div>
<div class="a" style="left:0px;top:352px;width:663px;height:1px;background:#A0A0A0;"></div>
<div class="a" style="left:182px;top:332px;width:1px;height:21px;background:#A0A0A0;"></div>
<div class="a" style="left:207px;top:332px;width:1px;height:21px;background:#A0A0A0;"></div>
<div class="a" style="left:228px;top:332px;width:1px;height:21px;background:#A0A0A0;"></div>
<div class="a" style="left:387px;top:332px;width:1px;height:21px;background:#A0A0A0;"></div>
<div class="a" style="left:603px;top:332px;width:1px;height:21px;background:#A0A0A0;"></div>
<div class="a" style="left:662px;top:332px;width:1px;height:21px;background:#A0A0A0;"></div>
<div class="a" style="left:72px;top:343px;width:14px;height:1px;background:repeating-linear-gradient(90deg,#A0A0A0 0 1px,transparent 1px 2px);"></div>
<svg class="a" style="left:87px;top:335px" width="14" height="14" viewBox="0 0 14 14" shape-rendering="crispEdges"><rect x="0.5" y="0.5" width="13" height="13" fill="#fff" stroke="#808080"/><path d="M2.6 7.4L4.9 10.6 11.4 3.2" fill="none" stroke="#000" stroke-width="2.5" shape-rendering="auto"/></svg>
<div class="t" style="left:107px;top:334px;width:75px;overflow:hidden;letter-spacing:-0.1px">mnEditPaste.Text</div>
<div class="t" style="left:186px;top:334px">20</div>
<div class="c" style="left:232px;top:332px;color:#000;letter-spacing:0.4px">&amp;Paste</div>
<div class="c" style="left:391px;top:332px;color:#000;letter-spacing:0.4px">Einfügen</div>
</div>
<svg width="0" height="0" style="position:absolute"><defs><pattern id="dith" width="2" height="2" patternUnits="userSpaceOnUse"><rect width="2" height="2" fill="#fff"/><rect width="1" height="1" fill="#F4F000"/><rect x="1" y="1" width="1" height="1" fill="#F4F000"/></pattern></defs></svg>
<div class="a" style="left:670px;top:75px;width:17px;height:360px;background:#E8E8EC;"></div>
<div class="a" style="left:669px;top:97px;width:1px;height:338px;background:#A0A0A0;"></div>
<div class="a" style="left:669px;top:75px;width:1px;height:21px;background:#E3EDF7;"></div>
<div class="a" style="left:674px;top:91px;width:9px;height:159px;background:#C2C3C9;"></div>
<svg class="a" style="left:674px;top:80px" width="9" height="5" viewBox="0 0 9 5" shape-rendering="crispEdges"><path d="M0 5L4.5 0 9 5z" fill="#868999" shape-rendering="auto"/></svg>
<svg class="a" style="left:674px;top:424px" width="9" height="5" viewBox="0 0 9 5" shape-rendering="crispEdges"><path d="M0 0L4.5 5 9 0z" fill="#868999" shape-rendering="auto"/></svg>
<div class="a" style="left:2px;top:437px;width:689px;height:26px;background:#F0F0F0;"></div>
<div class="a" style="left:60px;top:438px;width:631px;height:2px;background:#6E6E6E;"></div>
<div class="a" style="left:60px;top:438px;width:2px;height:24px;background:#6E6E6E;"></div>
<div class="a" style="left:59px;top:439px;width:1px;height:22px;background:#FAFAFA;"></div>
<div class="a" style="left:62px;top:440px;width:1px;height:20px;background:#FFFFFF;"></div>
<div class="a" style="left:62px;top:440px;width:75px;height:1px;background:#FFFFFF;"></div>
<div class="a" style="left:137px;top:440px;width:2px;height:22px;background:#6E6E6E;"></div>
<div class="a" style="left:62px;top:460px;width:77px;height:2px;background:#6E6E6E;"></div>
<div class="t" style="left:65px;top:442px;letter-spacing:0">Source Code</div>
<div class="a" style="left:139px;top:440px;width:1px;height:20px;background:#FFFFFF;"></div>
<div class="a" style="left:139px;top:440px;width:63px;height:1px;background:#FFFFFF;"></div>
<div class="a" style="left:202px;top:440px;width:2px;height:22px;background:#6E6E6E;"></div>
<div class="a" style="left:139px;top:460px;width:65px;height:2px;background:#6E6E6E;"></div>
<div class="t" style="left:144px;top:442px;letter-spacing:-0.3px">Resources</div>
<div class="t" style="left:9px;top:444px;letter-spacing:0.15px">Controls</div>
<div class="a" style="left:62px;top:462px;width:629px;height:1px;background:#FFFFFF;"></div>
<div class="a" style="left:691px;top:440px;width:1px;height:23px;background:#FFFFFF;"></div>
<div class="a" style="left:1px;top:463px;width:692px;height:2px;background:#505055;"></div>
<div class="a" style="left:1px;top:462px;width:61px;height:1px;background:#505055;"></div>
</body></html>
